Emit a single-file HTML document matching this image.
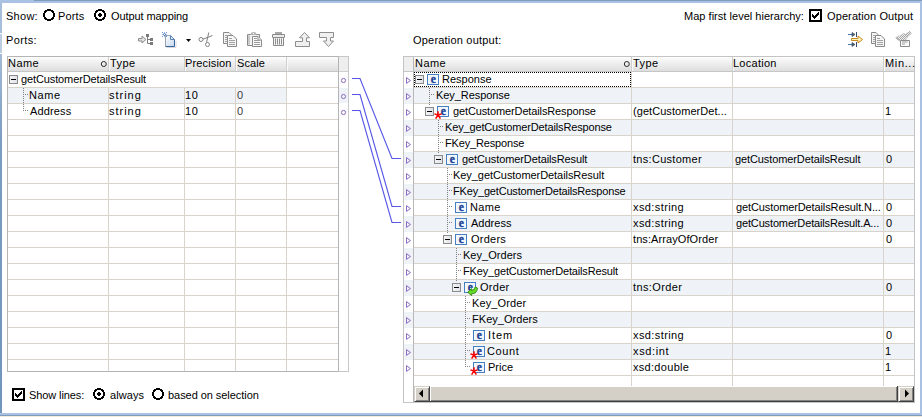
<!DOCTYPE html><html><head><meta charset="utf-8"><style>
*{margin:0;padding:0;box-sizing:border-box}
html,body{width:922px;height:417px;overflow:hidden;background:#fff}
body{position:relative;font-family:"Liberation Sans",sans-serif;font-size:11px;color:#000}
div,svg{position:absolute}
.t{line-height:15px;white-space:nowrap}
</style></head><body><div style="left:0px;top:0px;width:922px;height:3px;background:#a9c1e2"></div>
<div style="left:34px;top:0px;width:888px;height:1px;background:#7f9cbc"></div>
<div style="left:0px;top:3px;width:2px;height:30px;background:#a6bddb"></div>
<div style="left:0px;top:34px;width:2px;height:19px;background:#bccde2"></div>
<div style="left:0px;top:54px;width:2px;height:359px;background:linear-gradient(#a3bad7,#7a9cc1 25%,#7096bb)"></div>
<div style="left:920px;top:3px;width:2px;height:410px;background:#a9c1e2"></div>
<div style="left:0px;top:413px;width:922px;height:2px;background:#a9c1e2"></div>
<div style="left:0px;top:415px;width:922px;height:1px;background:#7f9cbc"></div>
<div style="left:0px;top:416px;width:922px;height:1px;background:#f1ecdc"></div>
<div class="t" style="left:6px;top:9px;letter-spacing:0.275px;">Show:</div>
<svg style="left:43px;top:9px" width="12" height="12" shape-rendering="crispEdges"><path d="M4 0h4v1h-4zM2 1h8v1h-8zM1 2h3v1h-3zM8 2h3v1h-3zM1 3h2v1h-2zM9 3h2v1h-2zM0 4h2v1h-2zM10 4h2v1h-2zM0 5h2v1h-2zM10 5h2v1h-2zM0 6h2v1h-2zM10 6h2v1h-2zM0 7h2v1h-2zM10 7h2v1h-2zM1 8h2v1h-2zM9 8h2v1h-2zM1 9h3v1h-3zM8 9h3v1h-3zM2 10h8v1h-8zM4 11h4v1h-4z" fill="#000"/></svg>
<div class="t" style="left:58px;top:9px;letter-spacing:0.150px;">Ports</div>
<svg style="left:94px;top:9px" width="12" height="12" shape-rendering="crispEdges"><path d="M4 0h4v1h-4zM2 1h8v1h-8zM1 2h3v1h-3zM8 2h3v1h-3zM1 3h2v1h-2zM9 3h2v1h-2zM0 4h2v1h-2zM10 4h2v1h-2zM0 5h2v1h-2zM10 5h2v1h-2zM0 6h2v1h-2zM10 6h2v1h-2zM0 7h2v1h-2zM10 7h2v1h-2zM1 8h2v1h-2zM9 8h2v1h-2zM1 9h3v1h-3zM8 9h3v1h-3zM2 10h8v1h-8zM4 11h4v1h-4zM5 4h2v1h-2zM4 5h4v1h-4zM4 6h4v1h-4zM5 7h2v1h-2z" fill="#000"/></svg>
<div class="t" style="left:111px;top:9px;letter-spacing:-0.085px;">Output mapping</div>
<div class="t" style="left:684px;top:9px;letter-spacing:0.028px;">Map first level hierarchy:</div>
<svg style="left:809px;top:9px" width="13" height="13" shape-rendering="crispEdges"><rect x="2" y="2" width="9" height="9" fill="#fff"/><path d="M0 0h13v13h-13z M2 2v9h9v-9z" fill="#000" fill-rule="evenodd"/><path d="M9 3h1v1h-1zM8 4h2v1h-2zM3 5h1v1h-1zM7 5h3v1h-3zM3 6h2v1h-2zM6 6h3v1h-3zM3 7h5v1h-5zM4 8h3v1h-3zM5 9h1v1h-1z" fill="#000"/></svg>
<div class="t" style="left:827px;top:9px;letter-spacing:0.107px;">Operation Output</div>
<div class="t" style="left:6px;top:33px;letter-spacing:0.380px;">Ports:</div>
<div class="t" style="left:413px;top:33px;letter-spacing:0.200px;">Operation output:</div>
<div style="left:7px;top:56px;width:332px;height:316px;border:1px solid #b4b4b4;background:#fff"></div>
<div style="left:8px;top:57px;width:330px;height:14px;background:linear-gradient(#fefefe,#f3f3f3 30%,#dedede)"></div>
<div style="left:8px;top:71px;width:330px;height:1px;background:#c6c6c6"></div>
<div style="left:108px;top:57px;width:1px;height:14px;background:#cfcfcf"></div>
<div style="left:109px;top:57px;width:1px;height:14px;background:#fafafa"></div>
<div style="left:184px;top:57px;width:1px;height:14px;background:#cfcfcf"></div>
<div style="left:185px;top:57px;width:1px;height:14px;background:#fafafa"></div>
<div style="left:235px;top:57px;width:1px;height:14px;background:#cfcfcf"></div>
<div style="left:236px;top:57px;width:1px;height:14px;background:#fafafa"></div>
<div style="left:286px;top:57px;width:1px;height:14px;background:#cfcfcf"></div>
<div style="left:287px;top:57px;width:1px;height:14px;background:#fafafa"></div>
<div style="left:338px;top:56px;width:11px;height:316px;border:1px solid #c8c8c8;border-left-color:#b4b4b4;background:#fff"></div>
<div style="left:339px;top:57px;width:9px;height:14px;background:#eeeeee"></div>
<div style="left:339px;top:71px;width:9px;height:1px;background:#d0d0d0"></div>
<div style="left:8px;top:88px;width:278px;height:15px;background:#eff3f8"></div>
<div style="left:339px;top:88px;width:9px;height:15px;background:#eff3f8"></div>
<div style="left:8px;top:87px;width:330px;height:1px;background:#d8d4cc"></div>
<div style="left:8px;top:103px;width:330px;height:1px;background:#d8d4cc"></div>
<div style="left:8px;top:119px;width:330px;height:1px;background:#d8d4cc"></div>
<div style="left:8px;top:135px;width:330px;height:1px;background:#d8d4cc"></div>
<div style="left:8px;top:151px;width:330px;height:1px;background:#d8d4cc"></div>
<div style="left:8px;top:167px;width:330px;height:1px;background:#d8d4cc"></div>
<div style="left:8px;top:183px;width:330px;height:1px;background:#d8d4cc"></div>
<div style="left:8px;top:199px;width:330px;height:1px;background:#d8d4cc"></div>
<div style="left:8px;top:215px;width:330px;height:1px;background:#d8d4cc"></div>
<div style="left:8px;top:231px;width:330px;height:1px;background:#d8d4cc"></div>
<div style="left:8px;top:247px;width:330px;height:1px;background:#d8d4cc"></div>
<div style="left:8px;top:263px;width:330px;height:1px;background:#d8d4cc"></div>
<div style="left:8px;top:279px;width:330px;height:1px;background:#d8d4cc"></div>
<div style="left:8px;top:295px;width:330px;height:1px;background:#d8d4cc"></div>
<div style="left:8px;top:311px;width:330px;height:1px;background:#d8d4cc"></div>
<div style="left:8px;top:327px;width:330px;height:1px;background:#d8d4cc"></div>
<div style="left:8px;top:343px;width:330px;height:1px;background:#d8d4cc"></div>
<div style="left:8px;top:359px;width:330px;height:1px;background:#d8d4cc"></div>
<div style="left:108px;top:88px;width:1px;height:283px;background:#d8d4cc"></div>
<div style="left:184px;top:88px;width:1px;height:283px;background:#d8d4cc"></div>
<div style="left:235px;top:88px;width:1px;height:283px;background:#d8d4cc"></div>
<div style="left:286px;top:72px;width:1px;height:299px;background:#d8d4cc"></div>
<div class="t" style="left:8px;top:56px;letter-spacing:0.433px;">Name</div>
<svg style="left:100px;top:60px" width="8" height="8"><circle cx="3.8" cy="4" r="2.5" fill="none" stroke="#222" stroke-width="0.95"/></svg>
<div class="t" style="left:110px;top:56px;letter-spacing:0.433px;">Type</div>
<div class="t" style="left:185px;top:56px;letter-spacing:0.137px;">Precision</div>
<div class="t" style="left:237px;top:56px;letter-spacing:0.100px;">Scale</div>
<div style="left:9px;top:75px;width:9px;height:9px;border:1px solid #8a8a8a;background:linear-gradient(90deg,#f4f4f4,#dfe3ea)"></div>
<div style="left:11px;top:79px;width:5px;height:1px;background:#000"></div>
<div class="t" style="left:21px;top:72px;letter-spacing:-0.113px;">getCustomerDetailsResult</div>
<div style="left:23px;top:88px;width:1px;height:23px;background:repeating-linear-gradient(#808080 0 1px,transparent 1px 2px)"></div>
<div style="left:25px;top:94px;width:4px;height:1px;background:repeating-linear-gradient(90deg,#808080 0 1px,transparent 1px 2px)"></div>
<div style="left:25px;top:110px;width:4px;height:1px;background:repeating-linear-gradient(90deg,#808080 0 1px,transparent 1px 2px)"></div>
<div class="t" style="left:29px;top:88px;letter-spacing:0.567px;">Name</div>
<div class="t" style="left:109px;top:88px;letter-spacing:0.980px;">string</div>
<div class="t" style="left:185px;top:88px;letter-spacing:0.700px;">10</div>
<div class="t" style="left:237px;top:88px;letter-spacing:-0.050px;color:#3a3a3a">0</div>
<div class="t" style="left:30px;top:104px;letter-spacing:0.150px;">Address</div>
<div class="t" style="left:109px;top:104px;letter-spacing:0.980px;">string</div>
<div class="t" style="left:185px;top:104px;letter-spacing:0.700px;">10</div>
<div class="t" style="left:237px;top:104px;letter-spacing:-0.050px;color:#3a3a3a">0</div>
<svg style="left:340px;top:76px" width="8" height="8"><circle cx="3.5" cy="4.5" r="2.1" fill="none" stroke="#8a6cc0" stroke-width="1.0"/></svg>
<svg style="left:340px;top:92px" width="8" height="8"><circle cx="3.5" cy="4.5" r="2.1" fill="none" stroke="#8a6cc0" stroke-width="1.0"/></svg>
<svg style="left:340px;top:108px" width="8" height="8"><circle cx="3.5" cy="4.5" r="2.1" fill="none" stroke="#8a6cc0" stroke-width="1.0"/></svg>

<svg style="left:136px;top:31px" width="200" height="18" viewBox="136 31 200 18">
 <!-- arrow+tree -->
 <path d="M138.5 38.5 H142 V36 L146 39.5 L142 43 V41 H138.5 Z" fill="#e2e0dc" stroke="#8c8c8c" stroke-width="1"/>
 <rect x="146" y="34" width="3" height="3" fill="#7a7a7a"/>
 <path d="M147.5 37 V43.5 M147.5 39.5 H150 M147.5 43.5 H150" stroke="#7a7a7a" stroke-width="1" fill="none"/>
 <rect x="150" y="38" width="3" height="3" fill="#7a7a7a"/>
 <rect x="150" y="42" width="3" height="3" fill="#7a7a7a"/>
 <!-- new doc -->
 <defs><linearGradient id="dg" x1="0" y1="0" x2="1" y2="1"><stop offset="0" stop-color="#ffffff"/><stop offset="1" stop-color="#c4d4ec"/></linearGradient></defs>
 <path d="M166.5 47.5 H176 V41" fill="none" stroke="#d8d8d8" stroke-width="1"/>
 <path d="M165.5 35.5 H170.5 L174.5 39.5 V46.5 H165.5 Z" fill="url(#dg)" stroke="none"/>
 <path d="M165.5 46.5 V35.5 H170.5" fill="none" stroke="#9aa6b8" stroke-width="1"/>
 <path d="M165.5 46.5 H174.5 V39.5" fill="none" stroke="#3a64a0" stroke-width="1"/>
 <path d="M170.5 35.5 V39.5 H174.5 Z" fill="#e2ebf6" stroke="#5a82b8" stroke-width="1"/>
 <path d="M164.5 32 L165.3 33.7 L167 34.5 L165.3 35.3 L164.5 37 L163.7 35.3 L162 34.5 L163.7 33.7 Z" fill="#3a6ab0"/>
 <rect x="162" y="32" width="1" height="1" fill="#6a9ad8"/><rect x="166" y="32" width="1" height="1" fill="#6a9ad8"/>
 <rect x="162" y="36" width="1" height="1" fill="#6a9ad8"/><rect x="166" y="36" width="1" height="1" fill="#6a9ad8"/>
 <circle cx="164.5" cy="34.5" r="0.8" fill="#fff"/>
 <!-- dropdown -->
 <path d="M186 39 H191 L188.5 42 Z" fill="#000"/>
 <!-- scissors -->
 <circle cx="201" cy="39.5" r="2" fill="none" stroke="#808080" stroke-width="1"/>
 <circle cx="207.5" cy="44.5" r="2" fill="none" stroke="#808080" stroke-width="1"/>
 <path d="M203 39.2 L212.5 35.5 M206.5 42.5 L208.8 32.5" stroke="#808080" stroke-width="1" fill="none"/>
 <!-- copy -->
 <path d="M223.5 32.5 H229 L231.5 35 V43.5 H223.5 Z" fill="#f4f4f4" stroke="#8a8a8a"/>
 <path d="M227.5 35.5 H233 L236.5 39 V46.5 H227.5 Z" fill="#f6f6f6" stroke="#8a8a8a"/>
 <path d="M229 38.5 H232 M229 40.5 H235 M229 42.5 H235 M229 44.5 H235 M225 35.5 H227 M225 37.5 H227 M225 39.5 H227 M225 41.5 H227" stroke="#a0a0a0" stroke-width="1"/>
 <!-- paste -->
 <path d="M247.5 34.5 H259.5 V45.5 H247.5 Z" fill="#f2f2f2" stroke="#8a8a8a"/>
 <path d="M249 35.5 V44.5" stroke="#c8c8c8" stroke-width="2"/>
 <path d="M250.5 35 Q250.5 32 253.5 32 Q256.5 32 256.5 35 Z" fill="#b4b4b4"/>
 <rect x="253" y="33" width="1" height="1" fill="#fff"/>
 <path d="M252.5 36.5 H258 L261.5 40 V46.5 H252.5 Z" fill="#fafafa" stroke="#8a8a8a"/>
 <path d="M258 36.5 V40 H261.5" fill="#e6e6e6" stroke="#9a9a9a"/>
 <path d="M254 38.5 H257 M254 40.5 H260 M254 42.5 H260 M254 44.5 H260" stroke="#9a9a9a" stroke-width="1"/>
 <!-- trash -->
 <rect x="275" y="32" width="7" height="2" fill="#a8a8a8"/>
 <path d="M272.5 34.5 H284.5 V37.5 H272.5 Z" fill="#ececec" stroke="#8a8a8a"/>
 <path d="M273.5 37.5 H283.5 V45.5 H273.5 Z" fill="#f4f4f4" stroke="#8a8a8a"/>
 <path d="M275.5 38.5 V44.5 M277.5 38.5 V44.5 M279.5 38.5 V44.5 M281.5 38.5 V44.5" stroke="#8e8e8e"/>
 <!-- up -->
 <path d="M295.5 41.5 H302.5 V37.8 H299.5 L304.5 32.5 L309.5 37.8 H306.5 V41.5 H309.5 V46.5 H295.5 Z" fill="#f0f0f0" stroke="#8e8e8e"/>
 <!-- down -->
 <path d="M319.5 32.5 H333.5 V37.5 H330.5 V41 H333.5 L328.5 46.5 L323.5 41 H326.5 V37.5 H319.5 Z" fill="#f0f0f0" stroke="#8e8e8e"/>
</svg>

<svg style="left:12px;top:388px" width="13" height="13" shape-rendering="crispEdges"><rect x="2" y="2" width="9" height="9" fill="#fff"/><path d="M0 0h13v13h-13z M2 2v9h9v-9z" fill="#000" fill-rule="evenodd"/><path d="M9 3h1v1h-1zM8 4h2v1h-2zM3 5h1v1h-1zM7 5h3v1h-3zM3 6h2v1h-2zM6 6h3v1h-3zM3 7h5v1h-5zM4 8h3v1h-3zM5 9h1v1h-1z" fill="#000"/></svg>
<div class="t" style="left:29px;top:388px;letter-spacing:-0.100px;">Show lines:</div>
<svg style="left:93px;top:388px" width="12" height="12" shape-rendering="crispEdges"><path d="M4 0h4v1h-4zM2 1h8v1h-8zM1 2h3v1h-3zM8 2h3v1h-3zM1 3h2v1h-2zM9 3h2v1h-2zM0 4h2v1h-2zM10 4h2v1h-2zM0 5h2v1h-2zM10 5h2v1h-2zM0 6h2v1h-2zM10 6h2v1h-2zM0 7h2v1h-2zM10 7h2v1h-2zM1 8h2v1h-2zM9 8h2v1h-2zM1 9h3v1h-3zM8 9h3v1h-3zM2 10h8v1h-8zM4 11h4v1h-4zM5 4h2v1h-2zM4 5h4v1h-4zM4 6h4v1h-4zM5 7h2v1h-2z" fill="#000"/></svg>
<div class="t" style="left:110px;top:388px;letter-spacing:0.080px;">always</div>
<svg style="left:152px;top:388px" width="12" height="12" shape-rendering="crispEdges"><path d="M4 0h4v1h-4zM2 1h8v1h-8zM1 2h3v1h-3zM8 2h3v1h-3zM1 3h2v1h-2zM9 3h2v1h-2zM0 4h2v1h-2zM10 4h2v1h-2zM0 5h2v1h-2zM10 5h2v1h-2zM0 6h2v1h-2zM10 6h2v1h-2zM0 7h2v1h-2zM10 7h2v1h-2zM1 8h2v1h-2zM9 8h2v1h-2zM1 9h3v1h-3zM8 9h3v1h-3zM2 10h8v1h-8zM4 11h4v1h-4z" fill="#000"/></svg>
<div class="t" style="left:168px;top:388px;letter-spacing:-0.053px;">based on selection</div>
<div style="left:403px;top:56px;width:512px;height:347px;border:1px solid #c4c4c4;background:#fff"></div>
<div style="left:413px;top:57px;width:1px;height:345px;background:#b8b8b8"></div>
<div style="left:404px;top:57px;width:9px;height:14px;background:#efefef"></div>
<div style="left:414px;top:57px;width:500px;height:14px;background:linear-gradient(#fefefe,#f3f3f3 30%,#dedede)"></div>
<div style="left:404px;top:71px;width:510px;height:1px;background:#c6c6c6"></div>
<div style="left:631px;top:57px;width:1px;height:14px;background:#cfcfcf"></div>
<div style="left:632px;top:57px;width:1px;height:14px;background:#fafafa"></div>
<div style="left:732px;top:57px;width:1px;height:14px;background:#cfcfcf"></div>
<div style="left:733px;top:57px;width:1px;height:14px;background:#fafafa"></div>
<div style="left:883px;top:57px;width:1px;height:14px;background:#cfcfcf"></div>
<div style="left:884px;top:57px;width:1px;height:14px;background:#fafafa"></div>
<div class="t" style="left:415px;top:56px;letter-spacing:0.433px;">Name</div>
<div class="t" style="left:633px;top:56px;letter-spacing:0.433px;">Type</div>
<div class="t" style="left:733px;top:56px;letter-spacing:0.257px;">Location</div>
<div class="t" style="left:885px;top:56px;letter-spacing:0.640px;">Min...</div>
<svg style="left:623px;top:60px" width="8" height="8"><circle cx="3.8" cy="4" r="2.5" fill="none" stroke="#222" stroke-width="0.95"/></svg>
<div style="left:414px;top:87px;width:500px;height:1px;background:#d8d4cc"></div>
<div style="left:404px;top:88px;width:9px;height:16px;background:#eff3f8"></div>
<div style="left:414px;top:88px;width:500px;height:15px;background:#eff3f8"></div>
<div style="left:414px;top:103px;width:500px;height:1px;background:#d8d4cc"></div>
<div style="left:414px;top:119px;width:500px;height:1px;background:#d8d4cc"></div>
<div style="left:404px;top:120px;width:9px;height:16px;background:#eff3f8"></div>
<div style="left:414px;top:120px;width:500px;height:15px;background:#eff3f8"></div>
<div style="left:414px;top:135px;width:500px;height:1px;background:#d8d4cc"></div>
<div style="left:414px;top:151px;width:500px;height:1px;background:#d8d4cc"></div>
<div style="left:404px;top:152px;width:9px;height:16px;background:#eff3f8"></div>
<div style="left:414px;top:152px;width:500px;height:15px;background:#eff3f8"></div>
<div style="left:414px;top:167px;width:500px;height:1px;background:#d8d4cc"></div>
<div style="left:414px;top:183px;width:500px;height:1px;background:#d8d4cc"></div>
<div style="left:404px;top:184px;width:9px;height:16px;background:#eff3f8"></div>
<div style="left:414px;top:184px;width:500px;height:15px;background:#eff3f8"></div>
<div style="left:414px;top:199px;width:500px;height:1px;background:#d8d4cc"></div>
<div style="left:414px;top:215px;width:500px;height:1px;background:#d8d4cc"></div>
<div style="left:404px;top:216px;width:9px;height:16px;background:#eff3f8"></div>
<div style="left:414px;top:216px;width:500px;height:15px;background:#eff3f8"></div>
<div style="left:414px;top:231px;width:500px;height:1px;background:#d8d4cc"></div>
<div style="left:414px;top:247px;width:500px;height:1px;background:#d8d4cc"></div>
<div style="left:404px;top:248px;width:9px;height:16px;background:#eff3f8"></div>
<div style="left:414px;top:248px;width:500px;height:15px;background:#eff3f8"></div>
<div style="left:414px;top:263px;width:500px;height:1px;background:#d8d4cc"></div>
<div style="left:414px;top:279px;width:500px;height:1px;background:#d8d4cc"></div>
<div style="left:404px;top:280px;width:9px;height:16px;background:#eff3f8"></div>
<div style="left:414px;top:280px;width:500px;height:15px;background:#eff3f8"></div>
<div style="left:414px;top:295px;width:500px;height:1px;background:#d8d4cc"></div>
<div style="left:414px;top:311px;width:500px;height:1px;background:#d8d4cc"></div>
<div style="left:404px;top:312px;width:9px;height:16px;background:#eff3f8"></div>
<div style="left:414px;top:312px;width:500px;height:15px;background:#eff3f8"></div>
<div style="left:414px;top:327px;width:500px;height:1px;background:#d8d4cc"></div>
<div style="left:414px;top:343px;width:500px;height:1px;background:#d8d4cc"></div>
<div style="left:404px;top:344px;width:9px;height:16px;background:#eff3f8"></div>
<div style="left:414px;top:344px;width:500px;height:15px;background:#eff3f8"></div>
<div style="left:414px;top:359px;width:500px;height:1px;background:#d8d4cc"></div>
<div style="left:414px;top:375px;width:500px;height:1px;background:#d8d4cc"></div>
<div style="left:631px;top:72px;width:1px;height:314px;background:#d8d4cc"></div>
<div style="left:732px;top:72px;width:1px;height:314px;background:#d8d4cc"></div>
<div style="left:883px;top:72px;width:1px;height:314px;background:#d8d4cc"></div>
<div style="left:429px;top:88px;width:1px;height:17px;background:repeating-linear-gradient(#808080 0 1px,transparent 1px 2px)"></div>
<div style="left:438px;top:120px;width:1px;height:33px;background:repeating-linear-gradient(#808080 0 1px,transparent 1px 2px)"></div>
<div style="left:447px;top:168px;width:1px;height:65px;background:repeating-linear-gradient(#808080 0 1px,transparent 1px 2px)"></div>
<div style="left:456px;top:248px;width:1px;height:33px;background:repeating-linear-gradient(#808080 0 1px,transparent 1px 2px)"></div>
<div style="left:465px;top:296px;width:1px;height:71px;background:repeating-linear-gradient(#808080 0 1px,transparent 1px 2px)"></div>
<svg style="left:405px;top:76px" width="8" height="9"><path d="M1.5 1.6 L5.5 4.5 L1.5 7.4 Z" fill="none" stroke="#8c6cc4" stroke-width="1.0"/></svg>
<div style="left:415px;top:75px;width:9px;height:9px;border:1px solid #8a8a8a;background:linear-gradient(90deg,#f4f4f4,#dfe3ea)"></div>
<div style="left:417px;top:79px;width:5px;height:1px;background:#000"></div>
<svg style="left:427px;top:74px" width="12" height="11"><rect x="0.5" y="0.5" width="11" height="10" fill="#f2f7fc" stroke="#4680c2" stroke-width="1"/><text x="6.2" y="8.7" text-anchor="middle" font-family="Liberation Serif" font-weight="bold" font-size="11.5" fill="#1a3f94" stroke="#1a3f94" stroke-width="0.35">e</text></svg>
<div class="t" style="left:442px;top:72px;letter-spacing:0.014px;">Response</div>
<svg style="left:405px;top:92px" width="8" height="9"><path d="M1.5 1.6 L5.5 4.5 L1.5 7.4 Z" fill="none" stroke="#8c6cc4" stroke-width="1.0"/></svg>
<div style="left:431px;top:94px;width:4px;height:1px;background:repeating-linear-gradient(90deg,#808080 0 1px,transparent 1px 2px)"></div>
<div class="t" style="left:436px;top:88px;letter-spacing:-0.064px;">Key_Response</div>
<svg style="left:405px;top:108px" width="8" height="9"><path d="M1.5 1.6 L5.5 4.5 L1.5 7.4 Z" fill="none" stroke="#8c6cc4" stroke-width="1.0"/></svg>
<div style="left:425px;top:107px;width:9px;height:9px;border:1px solid #8a8a8a;background:linear-gradient(90deg,#f4f4f4,#dfe3ea)"></div>
<div style="left:427px;top:111px;width:5px;height:1px;background:#000"></div>
<svg style="left:437px;top:106px" width="12" height="11"><rect x="0.5" y="0.5" width="11" height="10" fill="#f2f7fc" stroke="#4680c2" stroke-width="1"/><text x="6.2" y="8.7" text-anchor="middle" font-family="Liberation Serif" font-weight="bold" font-size="11.5" fill="#1a3f94" stroke="#1a3f94" stroke-width="0.35">e</text></svg>
<svg style="left:434px;top:111px" width="8" height="8"><path d="M4 4 V0.3 M4 4 L0.4 2.9 M4 4 L7.6 2.9 M4 4 L1.6 7.6 M4 4 L6.4 7.6" stroke="#f00" stroke-width="1.5"/></svg>
<div class="t" style="left:453px;top:104px;letter-spacing:-0.128px;">getCustomerDetailsResponse</div>
<div class="t" style="left:633px;top:104px;letter-spacing:0.053px;">(getCustomerDet...</div>
<div class="t" style="left:885px;top:104px;letter-spacing:-0.050px;">1</div>
<svg style="left:405px;top:124px" width="8" height="9"><path d="M1.5 1.6 L5.5 4.5 L1.5 7.4 Z" fill="none" stroke="#8c6cc4" stroke-width="1.0"/></svg>
<div style="left:440px;top:126px;width:4px;height:1px;background:repeating-linear-gradient(90deg,#808080 0 1px,transparent 1px 2px)"></div>
<div class="t" style="left:445px;top:120px;letter-spacing:-0.148px;">Key_getCustomerDetailsResponse</div>
<svg style="left:405px;top:140px" width="8" height="9"><path d="M1.5 1.6 L5.5 4.5 L1.5 7.4 Z" fill="none" stroke="#8c6cc4" stroke-width="1.0"/></svg>
<div style="left:440px;top:142px;width:4px;height:1px;background:repeating-linear-gradient(90deg,#808080 0 1px,transparent 1px 2px)"></div>
<div class="t" style="left:445px;top:136px;letter-spacing:-0.158px;">FKey_Response</div>
<svg style="left:405px;top:156px" width="8" height="9"><path d="M1.5 1.6 L5.5 4.5 L1.5 7.4 Z" fill="none" stroke="#8c6cc4" stroke-width="1.0"/></svg>
<div style="left:434px;top:155px;width:9px;height:9px;border:1px solid #8a8a8a;background:linear-gradient(90deg,#f4f4f4,#dfe3ea)"></div>
<div style="left:436px;top:159px;width:5px;height:1px;background:#000"></div>
<svg style="left:446px;top:154px" width="12" height="11"><rect x="0.5" y="0.5" width="11" height="10" fill="#f2f7fc" stroke="#4680c2" stroke-width="1"/><text x="6.2" y="8.7" text-anchor="middle" font-family="Liberation Serif" font-weight="bold" font-size="11.5" fill="#1a3f94" stroke="#1a3f94" stroke-width="0.35">e</text></svg>
<div class="t" style="left:462px;top:152px;letter-spacing:-0.104px;">getCustomerDetailsResult</div>
<div class="t" style="left:633px;top:152px;letter-spacing:0.291px;">tns:Customer</div>
<div class="t" style="left:735px;top:152px;letter-spacing:-0.100px;">getCustomerDetailsResult</div>
<div class="t" style="left:886px;top:152px;letter-spacing:-0.050px;">0</div>
<svg style="left:405px;top:172px" width="8" height="9"><path d="M1.5 1.6 L5.5 4.5 L1.5 7.4 Z" fill="none" stroke="#8c6cc4" stroke-width="1.0"/></svg>
<div style="left:449px;top:174px;width:4px;height:1px;background:repeating-linear-gradient(90deg,#808080 0 1px,transparent 1px 2px)"></div>
<div class="t" style="left:453px;top:168px;letter-spacing:-0.059px;">Key_getCustomerDetailsResult</div>
<svg style="left:405px;top:188px" width="8" height="9"><path d="M1.5 1.6 L5.5 4.5 L1.5 7.4 Z" fill="none" stroke="#8c6cc4" stroke-width="1.0"/></svg>
<div style="left:449px;top:190px;width:4px;height:1px;background:repeating-linear-gradient(90deg,#808080 0 1px,transparent 1px 2px)"></div>
<div class="t" style="left:453px;top:184px;letter-spacing:-0.177px;">FKey_getCustomerDetailsResponse</div>
<svg style="left:405px;top:204px" width="8" height="9"><path d="M1.5 1.6 L5.5 4.5 L1.5 7.4 Z" fill="none" stroke="#8c6cc4" stroke-width="1.0"/></svg>
<div style="left:449px;top:206px;width:4px;height:1px;background:repeating-linear-gradient(90deg,#808080 0 1px,transparent 1px 2px)"></div>
<svg style="left:455px;top:202px" width="12" height="11"><rect x="0.5" y="0.5" width="11" height="10" fill="#f2f7fc" stroke="#4680c2" stroke-width="1"/><text x="6.2" y="8.7" text-anchor="middle" font-family="Liberation Serif" font-weight="bold" font-size="11.5" fill="#1a3f94" stroke="#1a3f94" stroke-width="0.35">e</text></svg>
<div class="t" style="left:470px;top:200px;letter-spacing:0.333px;">Name</div>
<div class="t" style="left:633px;top:200px;letter-spacing:0.400px;">xsd:string</div>
<div class="t" style="left:736px;top:200px;letter-spacing:-0.111px;">getCustomerDetailsResult.N...</div>
<div class="t" style="left:886px;top:200px;letter-spacing:-0.050px;">0</div>
<svg style="left:405px;top:220px" width="8" height="9"><path d="M1.5 1.6 L5.5 4.5 L1.5 7.4 Z" fill="none" stroke="#8c6cc4" stroke-width="1.0"/></svg>
<div style="left:449px;top:222px;width:4px;height:1px;background:repeating-linear-gradient(90deg,#808080 0 1px,transparent 1px 2px)"></div>
<svg style="left:455px;top:218px" width="12" height="11"><rect x="0.5" y="0.5" width="11" height="10" fill="#f2f7fc" stroke="#4680c2" stroke-width="1"/><text x="6.2" y="8.7" text-anchor="middle" font-family="Liberation Serif" font-weight="bold" font-size="11.5" fill="#1a3f94" stroke="#1a3f94" stroke-width="0.35">e</text></svg>
<div class="t" style="left:471px;top:216px;letter-spacing:0.017px;">Address</div>
<div class="t" style="left:633px;top:216px;letter-spacing:0.400px;">xsd:string</div>
<div class="t" style="left:736px;top:216px;letter-spacing:-0.146px;">getCustomerDetailsResult.A...</div>
<div class="t" style="left:886px;top:216px;letter-spacing:-0.050px;">0</div>
<svg style="left:405px;top:236px" width="8" height="9"><path d="M1.5 1.6 L5.5 4.5 L1.5 7.4 Z" fill="none" stroke="#8c6cc4" stroke-width="1.0"/></svg>
<div style="left:443px;top:235px;width:9px;height:9px;border:1px solid #8a8a8a;background:linear-gradient(90deg,#f4f4f4,#dfe3ea)"></div>
<div style="left:445px;top:239px;width:5px;height:1px;background:#000"></div>
<svg style="left:455px;top:234px" width="12" height="11"><rect x="0.5" y="0.5" width="11" height="10" fill="#f2f7fc" stroke="#4680c2" stroke-width="1"/><text x="6.2" y="8.7" text-anchor="middle" font-family="Liberation Serif" font-weight="bold" font-size="11.5" fill="#1a3f94" stroke="#1a3f94" stroke-width="0.35">e</text></svg>
<div class="t" style="left:471px;top:232px;letter-spacing:0.240px;">Orders</div>
<div class="t" style="left:633px;top:232px;letter-spacing:0.087px;">tns:ArrayOfOrder</div>
<div class="t" style="left:886px;top:232px;letter-spacing:-0.050px;">0</div>
<svg style="left:405px;top:252px" width="8" height="9"><path d="M1.5 1.6 L5.5 4.5 L1.5 7.4 Z" fill="none" stroke="#8c6cc4" stroke-width="1.0"/></svg>
<div style="left:458px;top:254px;width:4px;height:1px;background:repeating-linear-gradient(90deg,#808080 0 1px,transparent 1px 2px)"></div>
<div class="t" style="left:463px;top:248px;letter-spacing:0.033px;">Key_Orders</div>
<svg style="left:405px;top:268px" width="8" height="9"><path d="M1.5 1.6 L5.5 4.5 L1.5 7.4 Z" fill="none" stroke="#8c6cc4" stroke-width="1.0"/></svg>
<div style="left:458px;top:270px;width:4px;height:1px;background:repeating-linear-gradient(90deg,#808080 0 1px,transparent 1px 2px)"></div>
<div class="t" style="left:463px;top:264px;letter-spacing:-0.161px;">FKey_getCustomerDetailsResult</div>
<svg style="left:405px;top:284px" width="8" height="9"><path d="M1.5 1.6 L5.5 4.5 L1.5 7.4 Z" fill="none" stroke="#8c6cc4" stroke-width="1.0"/></svg>
<div style="left:452px;top:283px;width:9px;height:9px;border:1px solid #8a8a8a;background:linear-gradient(90deg,#f4f4f4,#dfe3ea)"></div>
<div style="left:454px;top:287px;width:5px;height:1px;background:#000"></div>
<svg style="left:464px;top:282px" width="12" height="11"><rect x="0.5" y="0.5" width="11" height="10" fill="#f2f7fc" stroke="#4680c2" stroke-width="1"/><text x="6.2" y="8.7" text-anchor="middle" font-family="Liberation Serif" font-weight="bold" font-size="11.5" fill="#1a3f94" stroke="#1a3f94" stroke-width="0.35">e</text></svg>
<svg style="left:467px;top:286px" width="11" height="10"><path d="M0.8 6.3 L4.6 2.6 V4.4 Q7.6 4.4 8.2 0.8 L10.4 2 Q10.2 7.6 4.6 7.8 V9.6 Z" fill="#66dd22" stroke="#2f8a14" stroke-width="0.9"/></svg>
<div class="t" style="left:480px;top:280px;letter-spacing:0.275px;">Order</div>
<div class="t" style="left:633px;top:280px;letter-spacing:0.375px;">tns:Order</div>
<div class="t" style="left:886px;top:280px;letter-spacing:-0.050px;">0</div>
<svg style="left:405px;top:300px" width="8" height="9"><path d="M1.5 1.6 L5.5 4.5 L1.5 7.4 Z" fill="none" stroke="#8c6cc4" stroke-width="1.0"/></svg>
<div style="left:467px;top:302px;width:4px;height:1px;background:repeating-linear-gradient(90deg,#808080 0 1px,transparent 1px 2px)"></div>
<div class="t" style="left:472px;top:296px;letter-spacing:0.112px;">Key_Order</div>
<svg style="left:405px;top:316px" width="8" height="9"><path d="M1.5 1.6 L5.5 4.5 L1.5 7.4 Z" fill="none" stroke="#8c6cc4" stroke-width="1.0"/></svg>
<div style="left:467px;top:318px;width:4px;height:1px;background:repeating-linear-gradient(90deg,#808080 0 1px,transparent 1px 2px)"></div>
<div class="t" style="left:472px;top:312px;letter-spacing:0.040px;">FKey_Orders</div>
<svg style="left:405px;top:332px" width="8" height="9"><path d="M1.5 1.6 L5.5 4.5 L1.5 7.4 Z" fill="none" stroke="#8c6cc4" stroke-width="1.0"/></svg>
<div style="left:467px;top:334px;width:4px;height:1px;background:repeating-linear-gradient(90deg,#808080 0 1px,transparent 1px 2px)"></div>
<svg style="left:473px;top:330px" width="12" height="11"><rect x="0.5" y="0.5" width="11" height="10" fill="#f2f7fc" stroke="#4680c2" stroke-width="1"/><text x="6.2" y="8.7" text-anchor="middle" font-family="Liberation Serif" font-weight="bold" font-size="11.5" fill="#1a3f94" stroke="#1a3f94" stroke-width="0.35">e</text></svg>
<div class="t" style="left:488px;top:328px;letter-spacing:0.900px;">Item</div>
<div class="t" style="left:633px;top:328px;letter-spacing:0.400px;">xsd:string</div>
<div class="t" style="left:886px;top:328px;letter-spacing:-0.050px;">0</div>
<svg style="left:405px;top:348px" width="8" height="9"><path d="M1.5 1.6 L5.5 4.5 L1.5 7.4 Z" fill="none" stroke="#8c6cc4" stroke-width="1.0"/></svg>
<div style="left:467px;top:350px;width:4px;height:1px;background:repeating-linear-gradient(90deg,#808080 0 1px,transparent 1px 2px)"></div>
<svg style="left:473px;top:346px" width="12" height="11"><rect x="0.5" y="0.5" width="11" height="10" fill="#f2f7fc" stroke="#4680c2" stroke-width="1"/><text x="6.2" y="8.7" text-anchor="middle" font-family="Liberation Serif" font-weight="bold" font-size="11.5" fill="#1a3f94" stroke="#1a3f94" stroke-width="0.35">e</text></svg>
<svg style="left:470px;top:351px" width="8" height="8"><path d="M4 4 V0.3 M4 4 L0.4 2.9 M4 4 L7.6 2.9 M4 4 L1.6 7.6 M4 4 L6.4 7.6" stroke="#f00" stroke-width="1.5"/></svg>
<div class="t" style="left:487px;top:344px;letter-spacing:0.625px;">Count</div>
<div class="t" style="left:633px;top:344px;letter-spacing:0.633px;">xsd:int</div>
<div class="t" style="left:885px;top:344px;letter-spacing:-0.050px;">1</div>
<svg style="left:405px;top:364px" width="8" height="9"><path d="M1.5 1.6 L5.5 4.5 L1.5 7.4 Z" fill="none" stroke="#8c6cc4" stroke-width="1.0"/></svg>
<div style="left:467px;top:366px;width:4px;height:1px;background:repeating-linear-gradient(90deg,#808080 0 1px,transparent 1px 2px)"></div>
<svg style="left:473px;top:362px" width="12" height="11"><rect x="0.5" y="0.5" width="11" height="10" fill="#f2f7fc" stroke="#4680c2" stroke-width="1"/><text x="6.2" y="8.7" text-anchor="middle" font-family="Liberation Serif" font-weight="bold" font-size="11.5" fill="#1a3f94" stroke="#1a3f94" stroke-width="0.35">e</text></svg>
<svg style="left:470px;top:367px" width="8" height="8"><path d="M4 4 V0.3 M4 4 L0.4 2.9 M4 4 L7.6 2.9 M4 4 L1.6 7.6 M4 4 L6.4 7.6" stroke="#f00" stroke-width="1.5"/></svg>
<div class="t" style="left:488px;top:360px;letter-spacing:0.025px;">Price</div>
<div class="t" style="left:633px;top:360px;letter-spacing:0.300px;">xsd:double</div>
<div class="t" style="left:885px;top:360px;letter-spacing:-0.050px;">1</div>
<div style="left:414px;top:72px;width:217px;height:15px;border:1px dotted #000"></div>
<div style="left:414px;top:386px;width:500px;height:16px;background:#d4d0c8"></div>
<div style="left:430px;top:386px;width:468px;height:16px;background:#d4d0c8;border-right:1px solid #404040;border-bottom:1px solid #404040;box-shadow:inset 1px 1px 0 #fff,inset -1px -1px 0 #808080"></div>
<div style="left:414px;top:386px;width:16px;height:16px;background:#d4d0c8;border-top:1px solid #d4d0c8;border-left:1px solid #d4d0c8;border-right:1px solid #404040;border-bottom:1px solid #404040;box-shadow:inset 1px 1px 0 #fff,inset -1px -1px 0 #808080"></div>
<svg style="left:414px;top:386px" width="16" height="16"><path d="M5 7.5 L9 3.5 V11.5 Z" fill="#000"/></svg>
<div style="left:898px;top:386px;width:16px;height:16px;background:#d4d0c8;border-top:1px solid #d4d0c8;border-left:1px solid #d4d0c8;border-right:1px solid #404040;border-bottom:1px solid #404040;box-shadow:inset 1px 1px 0 #fff,inset -1px -1px 0 #808080"></div>
<svg style="left:898px;top:386px" width="16" height="16"><path d="M11 7.5 L7 3.5 V11.5 Z" fill="#000"/></svg>
<svg style="left:348px;top:70px" width="56" height="160" viewBox="348 70 56 160">
<path d="M352 78.5 H360 L392 158.5 H401" fill="none" stroke="#5858e6" stroke-width="1.15"/>
<path d="M352 94.5 H360 L392 206.5 H401" fill="none" stroke="#5858e6" stroke-width="1.15"/>
<path d="M352 110.5 H360 L392 222.5 H401" fill="none" stroke="#5858e6" stroke-width="1.15"/>
</svg>
<svg style="left:845px;top:30px" width="70" height="19" viewBox="845 30 70 19">
 <path d="M848 34.5 H854" stroke="#4a78b0" stroke-width="1"/>
 <path d="M852 32.5 L855 34.5 L852 36.5 Z" fill="#4a5a70" stroke="#4a5a70" stroke-width="0.8"/>
 <path d="M856.5 32 V37" stroke="#3a4a68" stroke-width="1"/>
 <path d="M848 44.5 H854" stroke="#4a78b0" stroke-width="1"/>
 <path d="M852 42.5 L855 44.5 L852 46.5 Z" fill="#4a5a70" stroke="#4a5a70" stroke-width="0.8"/>
 <path d="M856.5 42 V47" stroke="#3a4a68" stroke-width="1"/>
 <path d="M851.5 38.5 H858 V36 L862.5 39.5 L858 43 V40.5 H851.5 Z" fill="#fff2b8" stroke="#c88a20" stroke-width="1"/>
 <path d="M871.5 32.5 H876 L878.5 35 V43.5 H871.5 Z" fill="#f4f4f4" stroke="#8a8a8a"/>
 <path d="M875.5 35.5 H881 L884.5 39 V46.5 H875.5 Z" fill="#f6f6f6" stroke="#8a8a8a"/>
 <path d="M877 38.5 H880 M877 40.5 H883 M877 42.5 H883 M877 44.5 H883 M873 35.5 H875 M873 37.5 H875 M873 39.5 H875 M873 41.5 H875" stroke="#a0a0a0" stroke-width="1"/>
 <defs><pattern id="ck" width="2" height="2" patternUnits="userSpaceOnUse"><rect width="2" height="2" fill="#f0f0f0"/><rect width="1" height="1" fill="#a8a8a8"/><rect x="1" y="1" width="1" height="1" fill="#a8a8a8"/></pattern></defs>
 <path d="M895.5 37.5 L901 35 L904 33 L907.5 36.5 L906 40 L899.5 40.5 Z" fill="url(#ck)" stroke="#d0d0d0" stroke-width="0.6"/>
 <path d="M896 37.8 L899.5 40.8" stroke="#909090" stroke-width="1"/>
 <path d="M905.5 36 L910.8 32" stroke="url(#ck)" stroke-width="2.6"/>
 <path d="M905.2 35 L909.8 31.5 M906.8 37.2 L911.5 33.5" stroke="#9a9a9a" stroke-width="0.7"/>
 <path d="M900.5 40.5 H909.5 V46.5 H900.5 Z" fill="#fafafa" stroke="#8a8a8a"/>
 <path d="M902 42 H907.5 M902 44 H905" stroke="#9a9a9a"/>
</svg></body></html>
